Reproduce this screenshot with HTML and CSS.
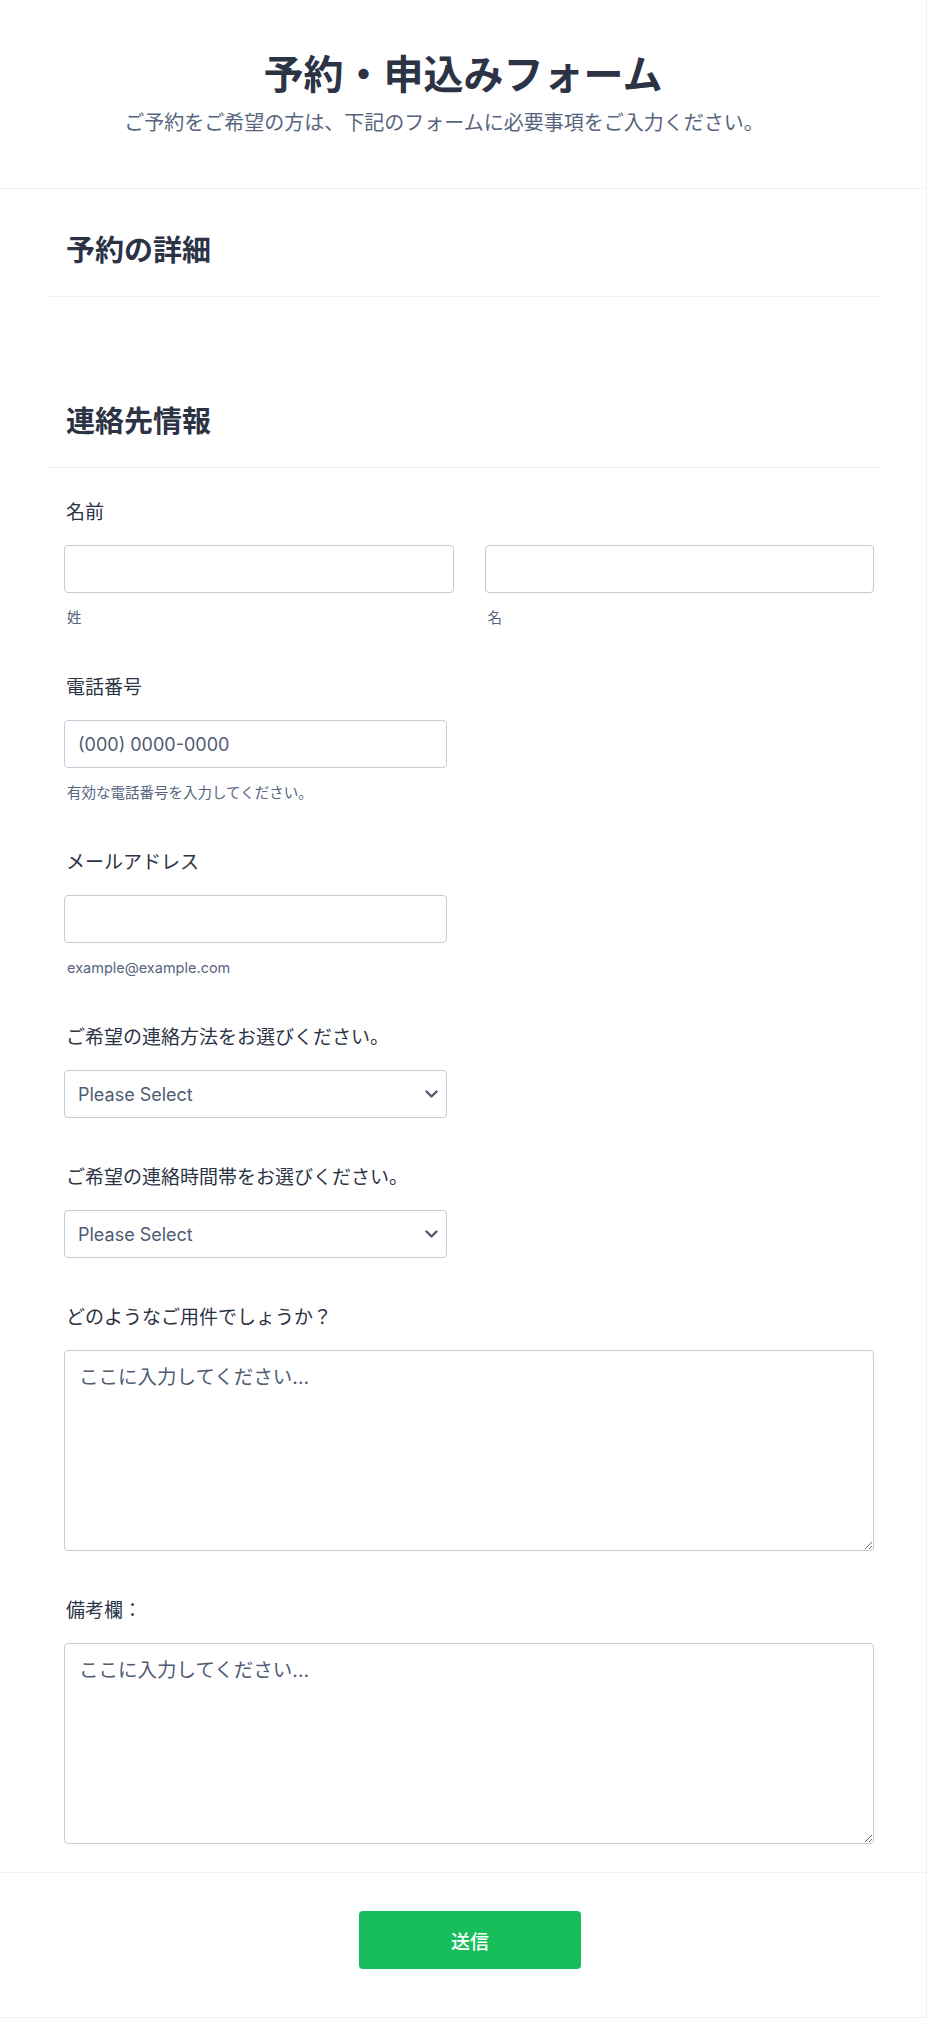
FILE: index.html
```html
<!DOCTYPE html>
<html lang="ja">
<head>
<meta charset="utf-8">
<title>予約・申込みフォーム</title>
<link rel="stylesheet" href="styles.css">
</head>
<body>
<div class="form-card">
  <header class="form-header">
    <h1 class="form-title">予約・申込みフォーム</h1>
    <p class="form-subtitle">ご予約をご希望の方は、下記のフォームに必要事項をご入力ください。</p>
  </header>

  <section class="form-section">
    <div class="section-head"><h2 class="section-title">予約の詳細</h2></div>
    <div class="section-empty"></div>
  </section>

  <section class="form-section">
    <div class="section-head"><h2 class="section-title">連絡先情報</h2></div>
    <ul class="field-list">
      <li class="field">
        <label class="field-label">名前</label>
        <div class="name-row">
          <div class="name-col">
            <input class="text-input" type="text">
            <span class="sublabel">姓</span>
          </div>
          <div class="name-col">
            <input class="text-input" type="text">
            <span class="sublabel">名</span>
          </div>
        </div>
      </li>
      <li class="field">
        <label class="field-label">電話番号</label>
        <input class="text-input input-short" type="tel" placeholder="(000) 0000-0000">
        <span class="sublabel">有効な電話番号を入力してください。</span>
      </li>
      <li class="field">
        <label class="field-label">メールアドレス</label>
        <input class="text-input input-short" type="email">
        <span class="sublabel">example@example.com</span>
      </li>
      <li class="field">
        <label class="field-label">ご希望の連絡方法をお選びください。</label>
        <div class="select-wrap">
          <select class="select-input"><option>Please Select</option></select>
          <svg class="chevron" width="13" height="9" viewBox="0 0 13 9"><polyline points="1.5,1.5 6.5,6.5 11.5,1.5" fill="none" stroke="#4f5b73" stroke-width="2.4" stroke-linecap="round" stroke-linejoin="round"/></svg>
        </div>
      </li>
      <li class="field">
        <label class="field-label">ご希望の連絡時間帯をお選びください。</label>
        <div class="select-wrap">
          <select class="select-input"><option>Please Select</option></select>
          <svg class="chevron" width="13" height="9" viewBox="0 0 13 9"><polyline points="1.5,1.5 6.5,6.5 11.5,1.5" fill="none" stroke="#4f5b73" stroke-width="2.4" stroke-linecap="round" stroke-linejoin="round"/></svg>
        </div>
      </li>
      <li class="field">
        <label class="field-label">どのようなご用件でしょうか？</label>
        <textarea class="text-area" placeholder="ここに入力してください..."></textarea>
      </li>
      <li class="field">
        <label class="field-label">備考欄：</label>
        <textarea class="text-area" placeholder="ここに入力してください..."></textarea>
      </li>
    </ul>
  </section>

  <footer class="form-footer">
    <button class="submit-btn" type="button">送信</button>
  </footer>
</div>
</body>
</html>
```

FILE: styles.css
```css
* { box-sizing: border-box; }

body {
  margin: 0;
  background: #ffffff;
  font-family: Inter, "Noto Sans CJK JP", sans-serif;
  color: #2c3345;
}

.form-card {
  width: 927px;
  background: #ffffff;
  border-right: 1px solid #eef0f5;
  border-bottom: 1px solid #eef0f5;
}

.form-header {
  padding: 52px 0 52px;
  border-bottom: 1px solid #f1f2f8;
  text-align: center;
}

.form-title {
  margin: 0;
  font-size: 40px;
  line-height: 46px;
  font-weight: 700;
  color: #2c3345;
}

.form-subtitle {
  margin: 12px 38px 0 0;
  font-size: 20px;
  line-height: 26px;
  color: #57647e;
}

.form-section {
  margin: 0 45px 0 46px;
}

.section-head {
  padding: 45px 20px 28px;
  border-bottom: 1px solid #f1f2f8;
}

.section-title {
  margin: 0;
  font-size: 29px;
  line-height: 34px;
  font-weight: 700;
  color: #2c3345;
}

.section-empty {
  height: 63px;
}

.field-list {
  list-style: none;
  margin: 0;
  padding: 9px 0 4px;
}

.field {
  display: flex;
  flex-direction: column;
  align-items: flex-start;
  padding: 24px 7px 24px 18px;
}

.field-label {
  display: block;
  font-size: 19px;
  line-height: 24px;
  margin: 0 0 20px 2px;
  color: #2c3345;
}

.name-row {
  display: flex;
  gap: 31px;
  width: 100%;
}

.name-col {
  flex: 1;
  display: flex;
  flex-direction: column;
}

.text-input,
.select-input {
  height: 48px;
  width: 100%;
  border: 1px solid #c3cad8;
  border-radius: 4px;
  background: #ffffff;
  padding: 0 13px;
  font-family: Inter, "Noto Sans CJK JP", sans-serif;
  font-size: 18px;
  color: #4f5b73;
}

.text-input::placeholder { color: #4f5b73; opacity: 1; }

.input-short { width: 383px; }

.sublabel {
  display: block;
  margin: 15px 0 0 3px;
  font-size: 14.5px;
  line-height: 20px;
  color: #57647e;
}

.select-wrap {
  position: relative;
  width: 383px;
}

.select-input {
  appearance: none;
  -webkit-appearance: none;
  display: block;
}

.chevron {
  position: absolute;
  right: 9px;
  top: 20px;
  pointer-events: none;
}

.text-area {
  width: 100%;
  height: 201px;
  border: 1px solid #c3cad8;
  border-radius: 4px;
  padding: 13px 14px 10px;
  font-family: Inter, "Noto Sans CJK JP", sans-serif;
  font-size: 19.5px;
  line-height: 26px;
  color: #4f5b73;
  resize: vertical;
}

.text-area::placeholder { color: #4f5b73; opacity: 1; }

.form-footer {
  border-top: 1px solid #f1f2f8;
  padding: 38px 0 48px 14px;
  display: flex;
  justify-content: center;
}

.submit-btn {
  width: 222px;
  height: 58px;
  border: none;
  border-radius: 4px;
  background: #18bd5b;
  color: #ffffff;
  font-family: Inter, "Noto Sans CJK JP", sans-serif;
  font-size: 19px;
  font-weight: 500;
}
```
